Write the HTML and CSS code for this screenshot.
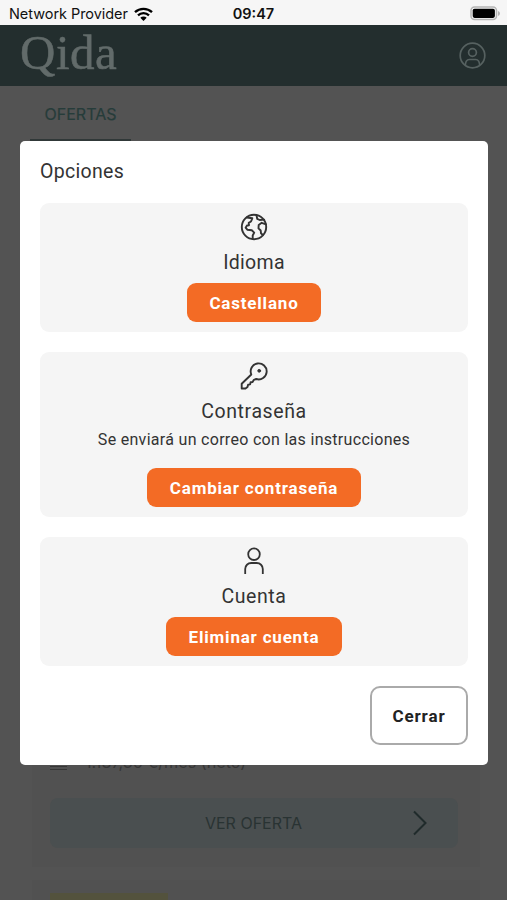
FILE: index.html
```
<!DOCTYPE html>
<html lang="es">
<head>
  <meta charset="UTF-8">
  <meta name="viewport" content="width=device-width, initial-scale=1.0">
  <title>Qida</title>
  <link rel="stylesheet" href="styles.css">
</head>
<body>
  <div class="status">
    <div class="carrier">
      <span>Network Provider</span>
      <svg width="19" height="14" viewBox="0 0 19 14" fill="none" stroke="#000" stroke-width="2.3">
        <path d="M1 5.2a12.3 12.3 0 0 1 17 0M4 8.3a8 8 0 0 1 11 0"/>
        <path d="M6.3 10.7a4.6 4.6 0 0 1 6.4 0L9.5 14z" fill="#000" stroke="none"/>
      </svg>
    </div>
    <span class="time">09:47</span>
    <svg class="battery" width="31" height="15" viewBox="0 0 31 15">
      <rect x="1" y="1" width="25.500" height="12.500" rx="3.500" fill="#f6f6f6" stroke="#b5b5b5" stroke-width="1.500"/>
      <rect x="2.700" y="2.700" width="22.200" height="9.200" rx="1.800" fill="#000"/>
      <path d="M28 5v5q2-.8 2-2.500T28 5z" fill="#b5b5b5"/>
    </svg>
  </div>
  <header>
    <div class="logo">Qida</div>
    <svg width="27" height="27" viewBox="0 0 27 27" fill="none" stroke="#566160" stroke-width="1.700">
      <circle cx="13.500" cy="13.500" r="12.300"/>
      <circle cx="13.500" cy="10.500" r="3.900"/>
      <path d="M6.300 23.200c.2-3.500 1.700-5.700 4-5.700h6.400c2.300 0 3.800 2.200 4 5.700"/>
    </svg>
  </header>
  <div class="tabs">
    <div class="tab">OFERTAS</div>
  </div>
  <main>
    <div class="offer">
      <div class="salary"><span class="bill"></span><span>1.187,36 €/mes (neto)</span></div>
      <div class="see-offer">
        <span>VER OFERTA</span>
        <svg width="14" height="26" viewBox="0 0 14 26" fill="none" stroke="#202b2b" stroke-width="2"><path d="M1 1.500 12.500 13 1 24.500"/></svg>
      </div>
    </div>
    <div class="offer next"><div class="label"></div></div>
  </main>

  <div class="modal">
    <h1>Opciones</h1>
    <section class="card">
      <svg width="28" height="28" viewBox="0 0 28 28" fill="none" stroke="#333" stroke-width="1.900" stroke-linejoin="round" stroke-linecap="round">
        <circle cx="14" cy="14" r="12.200"/>
        <path d="M6.800 4.500 12.300 5.300 11 8.500 8.700 9.800 9 12.200 7 12.500 5.600 14.700 7.300 16.700 11.800 17.300 14.200 19.600 12.700 22.500 12.700 26"/>
        <path d="M16.500 2.200 17.200 5.800 19.700 7 24.200 6.600M26 11.300 21.700 9.800 18.700 12 18.500 15.300 20.700 17.500 21 20.300 22.800 22"/>
      </svg>
      <h2>Idioma</h2>
      <button class="btn">Castellano</button>
    </section>
    <section class="card">
      <svg width="28" height="28" viewBox="0 0 28 28" fill="none" stroke="#333" stroke-width="1.900" stroke-linejoin="round" stroke-linecap="round">
        <path d="M11.300 12.500A8 8 0 1 1 16.200 17l-2.300.8-1.300 2.200-2 .2-.5 2.200-2 .3-.6 2.300-2 1.500H1.700v-4.700z"/>
        <circle cx="19.200" cy="8.800" r="1.400" fill="#333" stroke-width="1"/>
      </svg>
      <h2 class="clave">Contraseña</h2>
      <p>Se enviará un correo con las instrucciones</p>
      <button class="btn btn-clave">Cambiar contraseña</button>
    </section>
    <section class="card">
      <svg width="28" height="28" viewBox="0 0 28 28" fill="none" stroke="#333" stroke-width="1.800">
        <circle cx="14" cy="7.200" r="5.800"/>
        <path d="M5.200 27v-5a6 6 0 0 1 6-6h5.600a6 6 0 0 1 6 6v5"/>
      </svg>
      <h2 class="cuenta">Cuenta</h2>
      <button class="btn btn-cuenta">Eliminar cuenta</button>
    </section>
    <button class="close">Cerrar</button>
  </div>
</body>
</html>
```
FILE: styles.css
```
* { box-sizing: border-box; }
body { margin: 0; height: 900px; display: flex; flex-direction: column; overflow: hidden; position: relative; background: #535353; color: #333; font-family: Roboto, sans-serif; }
.status { height: 25px; flex: none; display: grid; grid-template-columns: 1fr auto 1fr; align-items: center; padding: 2px 6px 0 9px; background: #f6f6f6; color: #111; font-family: Inter, sans-serif; font-size: 14.5px; }
.carrier { display: flex; align-items: center; gap: 6px; white-space: nowrap; }
.carrier span { letter-spacing: -.05px; }
.time { margin-left: -3px; font-weight: 600; }
.battery { justify-self: end; }
header { height: 61px; flex: none; display: flex; align-items: center; justify-content: space-between; padding: 0 21px 0 20px; background: #232e2e; }
.logo { color: #626b6a; font-family: "Liberation Serif", serif; font-size: 49px; line-height: 54px; height: 60px; letter-spacing: .5px; -webkit-text-stroke: .5px #626b6a; }
.tabs { height: 55px; flex: none; padding-left: 30px; }
.tab { width: 101px; height: 55px; border-bottom: 2px solid #303838; line-height: 56px; text-align: center; color: #263c3a; font-family: Inter, sans-serif; font-size: 16px; -webkit-text-stroke: .2px #263c3a; }
main { flex: 1; min-height: 0; display: flex; flex-direction: column; gap: 13px; padding: 0 27px 0 32px; }
.offer { height: 726px; flex: none; display: flex; flex-direction: column; justify-content: flex-end; padding: 0 22px 19px 18px; background: #515151; }
.salary { display: flex; align-items: center; gap: 18px; margin-bottom: 26px; line-height: 20px; color: #363636; font-family: Inter, sans-serif; font-size: 16.2px; }
.bill { width: 17px; height: 15px; border-bottom: 4px double #363636; }
.see-offer { height: 50px; display: flex; align-items: center; justify-content: flex-end; gap: 111px; padding-right: 31px; border-radius: 8px; background: #4a4f50; color: #293333; font-family: Inter, sans-serif; font-size: 16px; }
.next { display: block; height: 20px; padding-top: 13px; }
.label { width: 118px; height: 7px; background: #53523d; }

.modal { position: absolute; left: 20px; top: 141px; width: 468px; height: 624px; display: flex; flex-direction: column; gap: 20px; padding: 20px; border-radius: 5px; background: #fff; }
h1 { margin: 0 0 1px; font-size: 19.5px; font-weight: 400; line-height: 21px; letter-spacing: .3px; }
.card { display: flex; flex-direction: column; align-items: center; padding: 10px; border-radius: 9px; background: #f5f5f5; }
.card svg { display: block; }
h2 { margin: 10px 0 9px; font-size: 19.5px; font-weight: 400; line-height: 23px; letter-spacing: .3px; }
.clave { margin-bottom: 7px; letter-spacing: .6px; }
.cuenta { letter-spacing: .6px; }
p { margin: 0 0 18px; font-size: 16px; line-height: 20px; letter-spacing: .3px; }
.btn { width: 134px; height: 39px; padding: 0; border: 0; border-radius: 9px; background: #f36b25; color: #fff; font: 700 17px Roboto, sans-serif; letter-spacing: .8px; white-space: nowrap; }
.btn-clave { width: 214px; }
.btn-cuenta { width: 176px; }
.close { align-self: flex-end; width: 98px; height: 59px; padding: 0; border: 2px solid #aaa; border-radius: 10px; background: #fff; color: #222; font: 700 17px Roboto, sans-serif; letter-spacing: .9px; }
```
